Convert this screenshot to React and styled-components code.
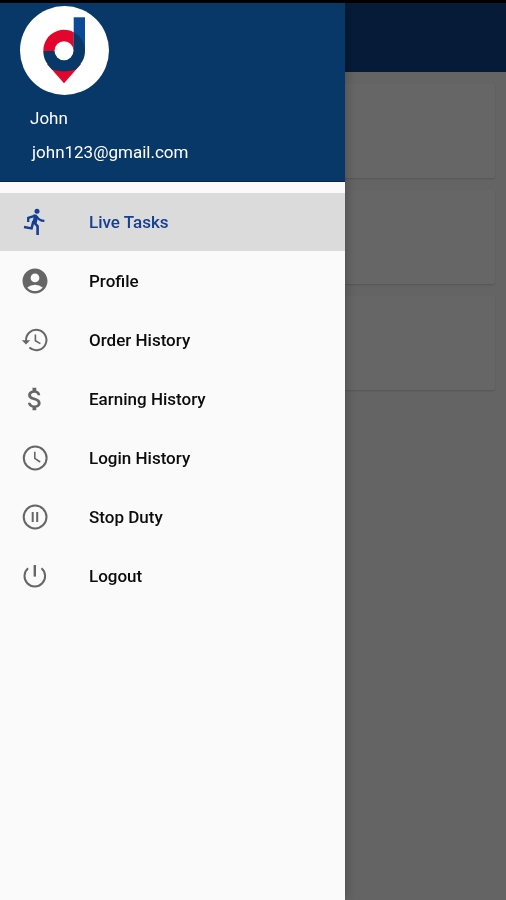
import React, { useState } from "react";
import { styled, createGlobalStyle } from "styled-components";
import { MdAccountCircle, MdAttachMoney } from "react-icons/md";

const GlobalStyle = createGlobalStyle`
  * {
    box-sizing: border-box;
  }
  body {
    margin: 0;
    background: #fafafa;
    font-family: Roboto, "Liberation Sans", sans-serif;
  }
`;

const Screen = styled.div`
  display: flex;
  flex-direction: column;
  min-height: 100vh;
  border-top: 3px solid #000;
`;

const AppBar = styled.header`
  height: 69px;
  background: #0d4589;
`;

const TaskList = styled.main`
  display: flex;
  flex-direction: column;
  gap: 12px;
  padding: 12px 11px;
`;

const TaskCard = styled.article`
  height: 94px;
  border-radius: 2px;
  background: #fff;
  box-shadow: 0 1px 2px rgba(0, 0, 0, 0.16);
`;

const Scrim = styled.div`
  position: fixed;
  inset: 0;
  background: rgba(0, 0, 0, 0.6);
`;

const Drawer = styled.aside`
  position: fixed;
  top: 3px;
  bottom: 0;
  left: 0;
  display: flex;
  flex-direction: column;
  width: min(345px, 85%);
  background: #fafafa;
  box-shadow: 0 0 12px rgba(0, 0, 0, 0.3);
  overflow-y: auto;
`;

const DrawerHeader = styled.div`
  display: flex;
  flex-direction: column;
  align-items: flex-start;
  height: 179px;
  flex-shrink: 0;
  padding: 3px 20px 0;
  border-bottom: 1px solid #042158;
  background: #083867;
  color: #fff;
`;

const Avatar = styled.svg`
  width: 89px;
  height: 89px;
`;

const UserName = styled.p`
  margin: 12px 0 0 10px;
  font-size: 17px;
  line-height: 22px;
`;

const UserEmail = styled.p`
  margin: 12px 0 0 12px;
  font-size: 17px;
  line-height: 22px;
`;

const Menu = styled.nav`
  display: flex;
  flex-direction: column;
  gap: 1px;
  padding-top: 11px;
`;

const MenuItem = styled.button`
  display: flex;
  align-items: center;
  gap: 39px;
  height: 58px;
  padding: 0 20px;
  border: 0;
  background: ${({ $active }) => ($active ? "#dbdbdb" : "transparent")};
  color: ${({ $active }) => ($active ? "#153f91" : "#0c0c0c")};
  font-family: inherit;
  font-size: 17px;
  font-weight: 500;
  line-height: 22px;
  text-align: left;
  cursor: pointer;

  svg {
    flex-shrink: 0;
    color: ${({ $active }) => ($active ? "#153f91" : "#666")};
  }
`;

const LineIcon = ({ size, children }) => (
    <svg
        width={size}
        height={size}
        viewBox="0 0 30 30"
        fill="none"
        stroke="currentColor"
        strokeWidth="2"
        aria-hidden="true"
    >
        {children}
    </svg>
);

const RunIcon = (props) => (
    <LineIcon {...props}>
        <circle cx="17" cy="4.2" r="2.5" fill="currentColor" stroke="none" />
        <path d="M13.2 7.6 L16.8 7.8 L18 10.5 L16.6 16.5 L12.2 16.2 L13.6 10.2 Z" fill="currentColor" stroke="none" />
        <path d="M15.5 8.6 L8.2 10.8 V15" strokeWidth="2.3" />
        <path d="M16.6 9.2 C18.2 12.4 20.6 13.7 24.4 13.9" strokeWidth="2.3" />
        <path d="M14 15.4 L17.6 19.2 V28" strokeWidth="2.6" />
        <path d="M13.4 14 L11.6 21.4 L4 19.9" strokeWidth="2.5" />
    </LineIcon>
);

const HistoryIcon = (props) => (
    <LineIcon {...props}>
        <path d="M6.1 16 A10.2 10.2 0 1 1 9.4 22.6" />
        <path d="M1.8 15.2 H10.2 L6 19.6 Z" fill="currentColor" stroke="none" />
        <path d="M15.4 9.5 V15.8 L20.4 18.6" strokeWidth="1.6" />
    </LineIcon>
);

const ClockIcon = (props) => (
    <LineIcon {...props}>
        <circle cx="15.2" cy="15" r="11.4" />
        <path d="M14.8 8.8 V15.4 L20.2 19" strokeWidth="1.6" />
    </LineIcon>
);

const PauseIcon = (props) => (
    <LineIcon {...props}>
        <circle cx="15.1" cy="15" r="11.4" />
        <path d="M12.7 10 V20 M17.2 10 V20" />
    </LineIcon>
);

const PowerIcon = (props) => (
    <LineIcon {...props}>
        <path d="M8.1 7.3 A10.3 10.3 0 1 0 21.5 7.3" />
        <path d="M14.8 4 V15.6" strokeWidth="2.4" />
    </LineIcon>
);

const menuItems = [
    { label: "Live Tasks", Icon: RunIcon },
    { label: "Profile", Icon: MdAccountCircle },
    { label: "Order History", Icon: HistoryIcon },
    { label: "Earning History", Icon: MdAttachMoney },
    { label: "Login History", Icon: ClockIcon },
    { label: "Stop Duty", Icon: PauseIcon },
    { label: "Logout", Icon: PowerIcon },
];

const Logo = () => (
    <Avatar viewBox="0 0 89 89" role="img" aria-label="Logo">
        <circle cx="44.5" cy="44.5" r="44.5" fill="#fff" />
        <path d="M27 58 L44 77.3 L61 58 Z" fill="#e2062c" />
        <path d="M23.3 45 A20.7 20.7 0 0 1 53.7 26.2 V45 Z" fill="#e2062c" />
        <path d="M53.7 11.3 H65 V45 H53.7 Z" fill="#0b4a97" />
        <path
            d="M23.3 45 H53.7 V26.2 A20.7 20.7 0 0 1 65 45 C65 53 61 58 56 63.6 Q50 65.6 44 65.4 Q38 65.6 32 63.6 C27 58 23.3 53 23.3 45 Z"
            fill="#083867"
        />
        <circle cx="44" cy="44.7" r="9.5" fill="#fff" />
    </Avatar>
);

const App = () => {
    const [active, setActive] = useState("Live Tasks");

    return (
        <>
            <GlobalStyle />
            <Screen>
                <AppBar />
                <TaskList>
                    <TaskCard />
                    <TaskCard />
                    <TaskCard />
                </TaskList>
            </Screen>
            <Scrim />
            <Drawer>
                <DrawerHeader>
                    <Logo />
                    <UserName>John</UserName>
                    <UserEmail>john123@gmail.com</UserEmail>
                </DrawerHeader>
                <Menu>
                    {menuItems.map(({ label, Icon }) => (
                        <MenuItem
                            key={label}
                            type="button"
                            $active={label === active}
                            onClick={() => setActive(label)}
                        >
                            <Icon size={30} />
                            {label}
                        </MenuItem>
                    ))}
                </Menu>
            </Drawer>
        </>
    );
};

export default App;
